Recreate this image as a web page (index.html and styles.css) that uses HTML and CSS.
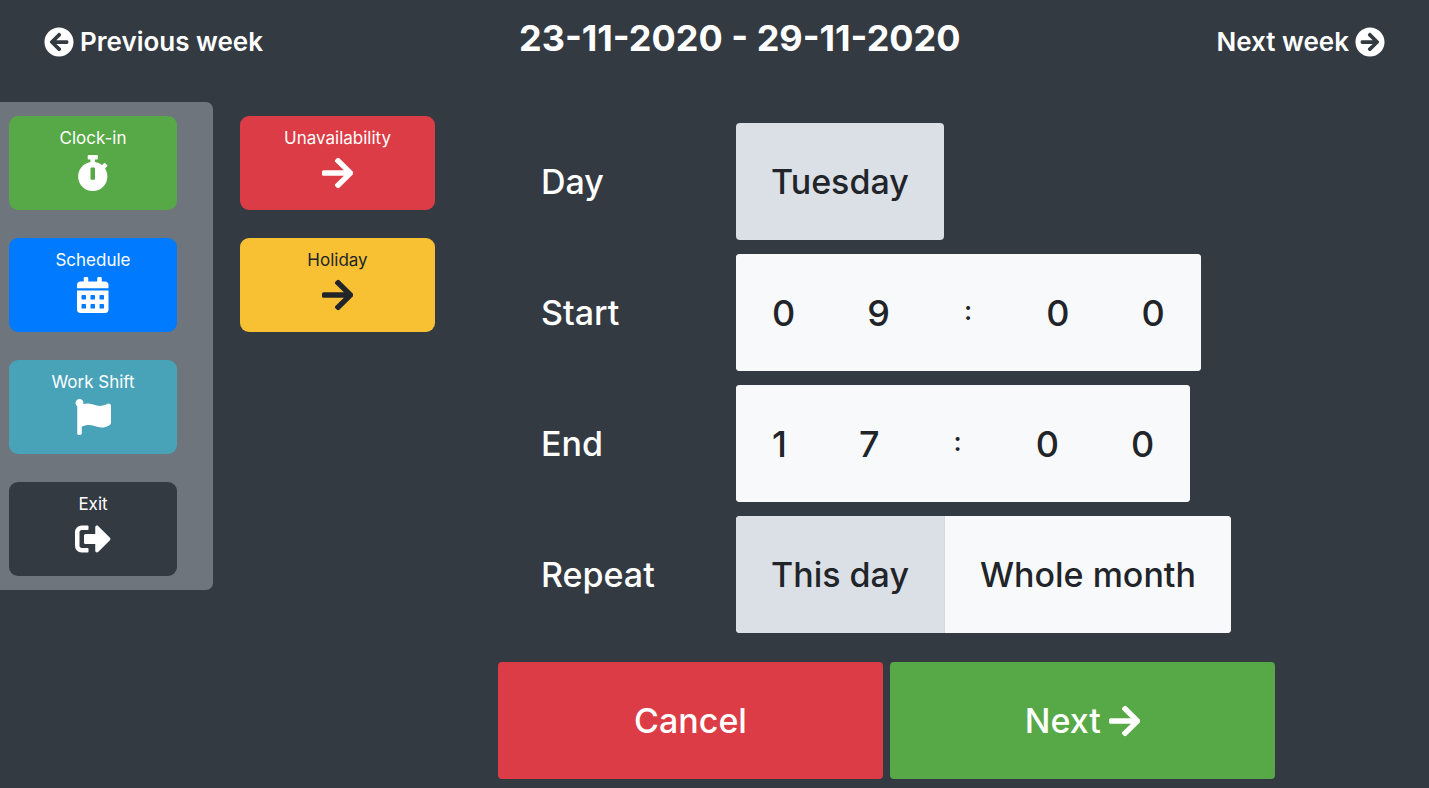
FILE: index.html
```
<!DOCTYPE html>
<html lang="en">
<head>
    <meta charset="UTF-8">
    <meta name="viewport" content="width=device-width, initial-scale=1.0">
    <title>Schedule</title>
    <link rel="stylesheet" href="styles.css">
</head>
<body>
    <header class="week-nav">
        <a href="#" class="week-link">
            <svg class="icon-circle" viewBox="0 0 512 512"><path d="M256 504C119 504 8 393 8 256S119 8 256 8s248 111 248 248-111 248-248 248zm28.9-143.6L209.4 288H392c13.3 0 24-10.7 24-24v-16c0-13.3-10.7-24-24-24H209.400l75.500-72.400c9.700-9.300 9.900-24.800.4-34.300l-11-10.900c-9.400-9.400-24.600-9.400-33.900 0L107.700 239c-9.400 9.400-9.400 24.600 0 33.900l132.700 132.700c9.400 9.400 24.600 9.400 33.900 0l11-10.900c9.500-9.500 9.300-25-.4-34.300z"/></svg>
            Previous week
        </a>
        <h1>23-11-2020 - 29-11-2020</h1>
        <a href="#" class="week-link">
            Next week
            <svg class="icon-circle" viewBox="0 0 512 512"><path d="M256 8c137 0 248 111 248 248S393 504 256 504 8 393 8 256 119 8 256 8zm-28.900 143.600l75.500 72.400H120c-13.300 0-24 10.700-24 24v16c0 13.300 10.700 24 24 24h182.600l-75.500 72.400c-9.700 9.300-9.900 24.800-.4 34.300l11 10.900c9.400 9.400 24.600 9.400 33.900 0L404.300 273c9.400-9.400 9.400-24.600 0-33.900L271.600 106.300c-9.400-9.400-24.600-9.400-33.900 0l-11 10.900c-9.500 9.600-9.300 25.100.4 34.400z"/></svg>
        </a>
    </header>

    <main>
        <nav class="sidebar">
            <button type="button" class="tile green">
                Clock-in
                <svg class="icon" viewBox="0 0 448 512"><path d="M432 304c0 114.900-93.100 208-208 208S16 418.900 16 304c0-104 76.300-190.200 176-205.500V64h-28c-6.600 0-12-5.400-12-12V12c0-6.600 5.400-12 12-12h120c6.600 0 12 5.400 12 12v40c0 6.600-5.400 12-12 12h-28v34.500c37.500 5.800 71.700 21.600 99.700 44.600l27.500-27.500c4.700-4.700 12.300-4.700 17 0l28.300 28.300c4.700 4.700 4.700 12.300 0 17l-29.400 29.400-.6.6C419.700 223.300 432 262.200 432 304zm-176 36V188.500c0-6.600-5.400-12-12-12h-40c-6.600 0-12 5.400-12 12V340c0 6.600 5.400 12 12 12h40c6.600 0 12-5.400 12-12z"/></svg>
            </button>
            <button type="button" class="tile blue">
                Schedule
                <svg class="icon" viewBox="0 0 448 512"><path fill-rule="evenodd" d="M0 464c0 26.500 21.500 48 48 48h352c26.500 0 48-21.500 48-48V192H0v272zM64 268q0-12 12-12h40q12 0 12 12v40q0 12-12 12H76q-12 0-12-12zM192 268q0-12 12-12h40q12 0 12 12v40q0 12-12 12h-40q-12 0-12-12zM320 268q0-12 12-12h40q12 0 12 12v40q0 12-12 12h-40q-12 0-12-12zM64 396q0-12 12-12h40q12 0 12 12v40q0 12-12 12H76q-12 0-12-12zM192 396q0-12 12-12h40q12 0 12 12v40q0 12-12 12h-40q-12 0-12-12zM320 396q0-12 12-12h40q12 0 12 12v40q0 12-12 12h-40q-12 0-12-12zM400 64h-48V16c0-8.800-7.200-16-16-16h-32c-8.800 0-16 7.200-16 16v48H160V16c0-8.800-7.200-16-16-16h-32c-8.800 0-16 7.200-16 16v48H48C21.500 64 0 85.500 0 112v48h448v-48c0-26.500-21.500-48-48-48z"/></svg>
            </button>
            <button type="button" class="tile teal">
                Work Shift
                <svg class="icon" viewBox="0 0 512 512"><path d="M349.565 98.783C295.978 98.783 251.721 64 184.348 64c-24.955 0-47.309 4.384-68.045 12.013a55.947 55.947 0 0 0 3.586-23.562C118.117 24.015 94.806 1.206 66.338.048 34.345-1.254 8 24.296 8 56c0 19.026 9.497 35.825 24 45.945V488c0 13.255 10.745 24 24 24h16c13.255 0 24-10.745 24-24v-94.400c28.311-12.064 63.582-22.122 114.435-22.122 53.588 0 97.844 34.783 165.217 34.783 48.169 0 86.667-16.294 122.505-40.858C506.840 359.452 512 349.571 512 339.045v-243.100c0-23.393-24.269-38.870-45.485-29.016-34.338 15.948-76.454 31.854-116.950 31.854z"/></svg>
            </button>
            <button type="button" class="tile dark">
                Exit
                <svg class="icon" viewBox="0 0 512 512"><path d="M497 273L329 441c-15 15-41 4.500-41-17v-96H152c-13.300 0-24-10.700-24-24v-96c0-13.300 10.700-24 24-24h136V88c0-21.400 25.900-32 41-17l168 168c9.300 9.400 9.300 24.600 0 34zM192 436v-40c0-6.600-5.400-12-12-12H96c-17.700 0-32-14.300-32-32V160c0-17.700 14.300-32 32-32h84c6.600 0 12-5.400 12-12V76c0-6.600-5.400-12-12-12H96c-53 0-96 43-96 96v192c0 53 43 96 96 96h84c6.600 0 12-5.400 12-12z"/></svg>
            </button>
        </nav>

        <div class="types">
            <button type="button" class="tile red">
                Unavailability
                <svg class="icon" viewBox="0 0 448 512"><path d="M190.500 66.900l22.200-22.200c9.400-9.400 24.600-9.400 33.900 0L441 239c9.400 9.400 9.400 24.600 0 33.900L246.600 467.300c-9.400 9.400-24.600 9.400-33.900 0l-22.200-22.200c-9.500-9.500-9.300-25 .4-34.300L311.400 296H24c-13.300 0-24-10.700-24-24v-32c0-13.300 10.700-24 24-24h287.400L190.900 101.200c-9.800-9.300-10-24.800-.4-34.300z"/></svg>
            </button>
            <button type="button" class="tile yellow">
                Holiday
                <svg class="icon" viewBox="0 0 448 512"><path d="M190.500 66.900l22.200-22.200c9.400-9.400 24.600-9.400 33.900 0L441 239c9.400 9.400 9.400 24.600 0 33.900L246.600 467.300c-9.400 9.400-24.600 9.400-33.900 0l-22.200-22.200c-9.500-9.500-9.300-25 .4-34.300L311.400 296H24c-13.300 0-24-10.700-24-24v-32c0-13.300 10.700-24 24-24h287.400L190.900 101.200c-9.800-9.300-10-24.800-.4-34.300z"/></svg>
            </button>
        </div>

        <form class="shift-form">
            <div class="row" role="group" aria-labelledby="dayLabel">
                <span class="row-label" id="dayLabel">Day</span>
                <div class="btn-group">
                    <button type="button" class="btn active" aria-pressed="true">Tuesday</button>
                </div>
            </div>
            <div class="row" role="group" aria-labelledby="startLabel">
                <span class="row-label" id="startLabel">Start</span>
                <div class="btn-group">
                    <button type="button" class="btn digit">0</button>
                    <button type="button" class="btn digit">9</button>
                    <span class="colon">:</span>
                    <button type="button" class="btn digit">0</button>
                    <button type="button" class="btn digit">0</button>
                </div>
            </div>
            <div class="row" role="group" aria-labelledby="endLabel">
                <span class="row-label" id="endLabel">End</span>
                <div class="btn-group">
                    <button type="button" class="btn digit">1</button>
                    <button type="button" class="btn digit">7</button>
                    <span class="colon">:</span>
                    <button type="button" class="btn digit">0</button>
                    <button type="button" class="btn digit">0</button>
                </div>
            </div>
            <div class="row" role="group" aria-labelledby="repeatLabel">
                <span class="row-label" id="repeatLabel">Repeat</span>
                <div class="btn-group">
                    <button type="button" class="btn active split" aria-pressed="true">This day</button>
                    <button type="button" class="btn" aria-pressed="false">Whole month</button>
                </div>
            </div>
            <div class="actions">
                <button type="button" class="action red">Cancel</button>
                <button type="submit" class="action green">
                    Next
                    <svg class="icon" viewBox="0 0 448 512"><path d="M190.500 66.900l22.200-22.200c9.400-9.400 24.600-9.400 33.900 0L441 239c9.400 9.400 9.400 24.600 0 33.900L246.600 467.300c-9.400 9.400-24.600 9.400-33.900 0l-22.200-22.200c-9.500-9.500-9.300-25 .4-34.300L311.400 296H24c-13.300 0-24-10.700-24-24v-32c0-13.300 10.700-24 24-24h287.400L190.900 101.200c-9.800-9.300-10-24.800-.4-34.300z"/></svg>
                </button>
            </div>
        </form>
    </main>
</body>
</html>
```
FILE: styles.css
```
* {
    box-sizing: border-box;
    margin: 0;
    padding: 0;
}

body {
    font-family: Inter, sans-serif;
    background-color: #343a42;
    color: #ffffff;
}

button {
    font-family: inherit;
    color: inherit;
    border: none;
    cursor: pointer;
}

svg {
    fill: currentColor;
}

.week-nav {
    display: flex;
    justify-content: space-between;
    align-items: flex-start;
    padding: 16px 44px 0;
    margin-bottom: 40px;
}

h1 {
    font-size: 36px;
    line-height: 44px;
    font-weight: 700;
}

.week-link {
    display: flex;
    align-items: center;
    gap: 6px;
    padding-top: 6px;
    font-size: 26px;
    line-height: 40px;
    font-weight: 600;
    color: #ffffff;
    text-decoration: none;
}

.icon-circle {
    width: 30px;
    height: 30px;
}

main {
    display: flex;
    align-items: flex-start;
}

.sidebar,
.types {
    display: flex;
    flex-direction: column;
    gap: 28px;
    padding: 14px 0;
}

.sidebar {
    width: 213px;
    padding-left: 9px;
    padding-right: 36px;
    background-color: #6e757d;
    border-radius: 0 7px 7px 0;
}

.types {
    width: 195px;
    margin-left: 27px;
}

.tile {
    display: flex;
    flex-direction: column;
    align-items: center;
    gap: 3px;
    padding: 9px 0 19px;
    font-size: 17px;
    line-height: 27px;
    border-radius: 9px;
}

.icon {
    height: 36px;
}

.green {
    background-color: #57a846;
}

.blue {
    background-color: #007bff;
}

.teal {
    background-color: #48a2b8;
}

.dark {
    background-color: #343a42;
}

.red {
    background-color: #dc3c46;
}

.yellow {
    background-color: #f8c033;
    color: #212529;
}

.shift-form {
    flex: 1;
    display: flex;
    flex-direction: column;
    gap: 14px;
    padding: 21px 154px 9px 63px;
}

.row {
    display: flex;
    align-items: center;
    padding-left: 43px;
    font-size: 34px;
    font-weight: 500;
}

.row-label {
    width: 195px;
}

.btn-group {
    display: flex;
    background-color: #f8f9fb;
    border-radius: 4px;
    overflow: hidden;
    color: #212529;
}

.btn {
    padding: 31px 35px;
    font-size: 34px;
    line-height: 55px;
    font-weight: 500;
    background-color: #f8f9fb;
}

.btn.digit {
    padding: 32px 36px 30px;
    font-size: 36px;
}

.btn.active {
    background-color: #dbdfe6;
}

.btn.split {
    border-right: 1px solid #d3d9df;
}

.colon {
    padding: 29px 38px 33px;
    font-size: 27px;
    line-height: 55px;
    font-weight: 500;
}

.actions {
    display: grid;
    grid-template-columns: 1fr 1fr;
    gap: 7px;
    margin-top: 15px;
}

.action {
    display: flex;
    justify-content: center;
    align-items: center;
    gap: 8px;
    padding: 31px 0;
    font-size: 34px;
    line-height: 55px;
    font-weight: 500;
    border-radius: 4px;
}
```
